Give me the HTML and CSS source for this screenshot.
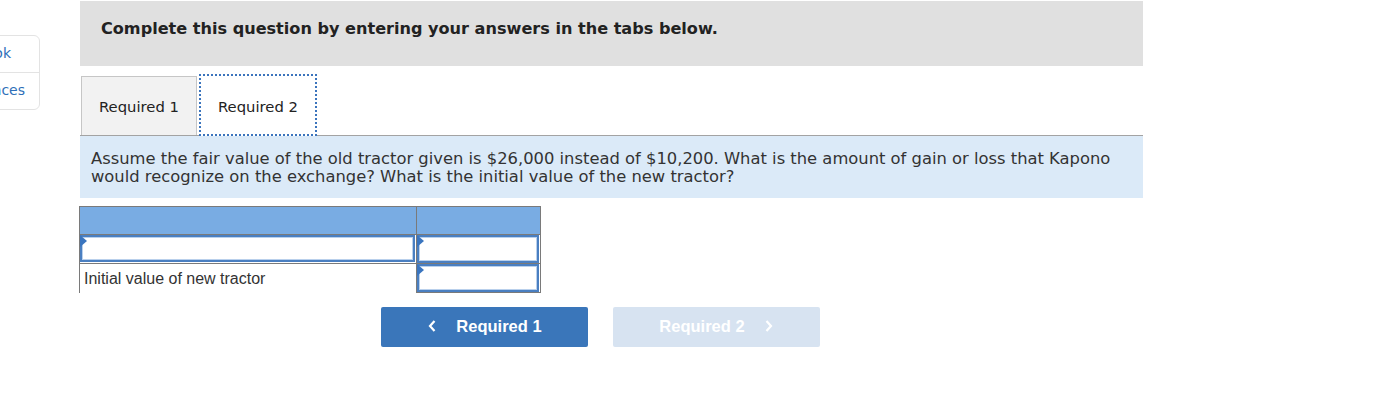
FILE: index.html
```html
<!DOCTYPE html>
<html>
<head>
<meta charset="utf-8">
<link rel="stylesheet" href="styles.css">
</head>
<body>
<div class="page">
  <aside class="side">
    <div class="side-card">
      <div class="side-item first">ok</div>
      <div class="side-item second">nces</div>
    </div>
  </aside>
  <main class="main">
    <div class="instr">Complete this question by entering your answers in the tabs below.</div>
    <div class="tabs">
      <div class="tab">Required 1</div>
      <div class="tab active">Required 2</div>
    </div>
    <div class="question">Assume the fair value of the old tractor given is $26,000 instead of $10,200. What is the amount of gain or loss that Kapono would recognize on the exchange? What is the initial value of the new tractor?</div>
    <div class="grid">
      <div class="hd c1"></div>
      <div class="hd c2"></div>
      <div class="cell c1"><div class="inp"></div></div>
      <div class="cell c2"><div class="inp"></div></div>
      <div class="cell c1 label">Initial value of new tractor</div>
      <div class="cell c2 last"><div class="inp"></div></div>
    </div>
    <div class="nav">
      <div class="btn prev"><svg class="chev" width="10" height="14" viewBox="0 0 10 14"><path d="M7.5 2 L3 7 L7.5 12" fill="none" stroke="#fff" stroke-width="2.2"/></svg><span>Required 1</span></div>
      <div class="btn next"><span>Required 2</span><svg class="chev" width="10" height="14" viewBox="0 0 10 14"><path d="M2.5 2 L7 7 L2.5 12" fill="none" stroke="#fff" stroke-width="2.2"/></svg></div>
    </div>
  </main>
</div>
</body>
</html>
```
FILE: styles.css
```css
html, body { margin: 0; padding: 0; background: #fff; }
body { font-family: "DejaVu Sans", Verdana, sans-serif; color: #222; }
.page { display: flex; align-items: flex-start; }
.side { width: 40px; flex: none; overflow: hidden; padding-top: 35px; }
.side-card {
  margin-left: -40px; width: 78px; border: 1px solid #e3e3e3; border-radius: 6px;
  font-family: "DejaVu Sans", Verdana, sans-serif; font-size: 14px; color: #2f6fb8;
}
.side-item { height: 36px; line-height: 34px; text-align: right; box-sizing: border-box; white-space: nowrap; }
.side-item.first { padding-right: 28px; }
.side-item.second { padding-right: 14px; border-top: 1px solid #e3e3e3; height: 37px; }
.main { margin-left: 40px; width: 1063px; padding-top: 1px; }
.instr {
  background: #e0e0e0; height: 65px; box-sizing: border-box; padding: 18px 0 0 21px;
  font-weight: bold; font-size: 16.1px; color: #222;
}
.tabs { display: flex; align-items: flex-end; margin-top: 9px; border-bottom: 1px solid #a3a3a3; height: 60px; padding-left: 1px; gap: 2px; }
.tab {
  width: 116px; height: 59px; box-sizing: border-box; border: 1px solid #c6c6c6; border-bottom: none;
  background: #f2f2f2; font-size: 14.8px; color: #222; display: flex; align-items: center; justify-content: center;
  padding-top: 1px;
}
.tab.active { background: #fff; border: 2px dotted #3b74bd; height: 62px; margin-bottom: -1px; position: relative; width: 118px; padding-top: 2px; }
.question {
  background: #dbeaf8; height: 62px; box-sizing: border-box; padding: 14px 11px 0 11px;
  font-size: 16.35px; line-height: 18px; color: #333;
}
.grid { display: grid; grid-template-columns: 337px 125px; grid-template-rows: 29px 29px 29px; margin: 8px 0 0 -1px; width: 462px; }
.hd { background: #79ace3; border-top: 1px solid #7a7a7a; border-bottom: 1px solid #7a7a7a; box-sizing: border-box; }
.hd.c1 { border-left: 1px solid #7a7a7a; }
.hd.c2 { border-left: 1px solid #7a7a7a; border-right: 1px solid #7a7a7a; }
.cell { box-sizing: border-box; border-left: 1px solid #7a7a7a; }
.cell.c2 { border-right: 1px solid #7a7a7a; border-left: 1px solid #7a7a7a; border-bottom: 1px solid #7a7a7a; }
.cell.c1 { padding: 0 1px 1px 0; border-bottom: 1px solid #7a7a7a; }
.cell.label { border-bottom: none; font-family: "Liberation Sans", Arial, sans-serif; font-size: 16px; color: #333; padding: 6px 0 0 4px; }
.inp {
  height: 100%; box-sizing: border-box; border: 2px solid #4a7fc1; box-shadow: inset 0 0 0 1px #b9d0ec; background: #fff; position: relative;
}
.cell.c2 .inp { margin: 0 1px 0 0; }
.inp::before {
  content: ""; position: absolute; left: -2px; top: -2px;
  border-top: 6px solid transparent; border-bottom: 6px solid transparent; border-left: 7px solid #3a75bf;
}
.nav { display: flex; gap: 25px; margin: 14px 0 0 301px; }
.btn {
  width: 207px; height: 40px; border-radius: 2px; display: flex; align-items: center; justify-content: center; gap: 19px;
  font-family: "Liberation Sans", Arial, sans-serif; font-weight: bold; font-size: 16.5px; color: #fff; padding-bottom: 2px; box-sizing: border-box;
}
.btn.prev { background: #3a76ba; }
.btn.next { background: #d7e3f1; }
.chev { display: block; }
```
